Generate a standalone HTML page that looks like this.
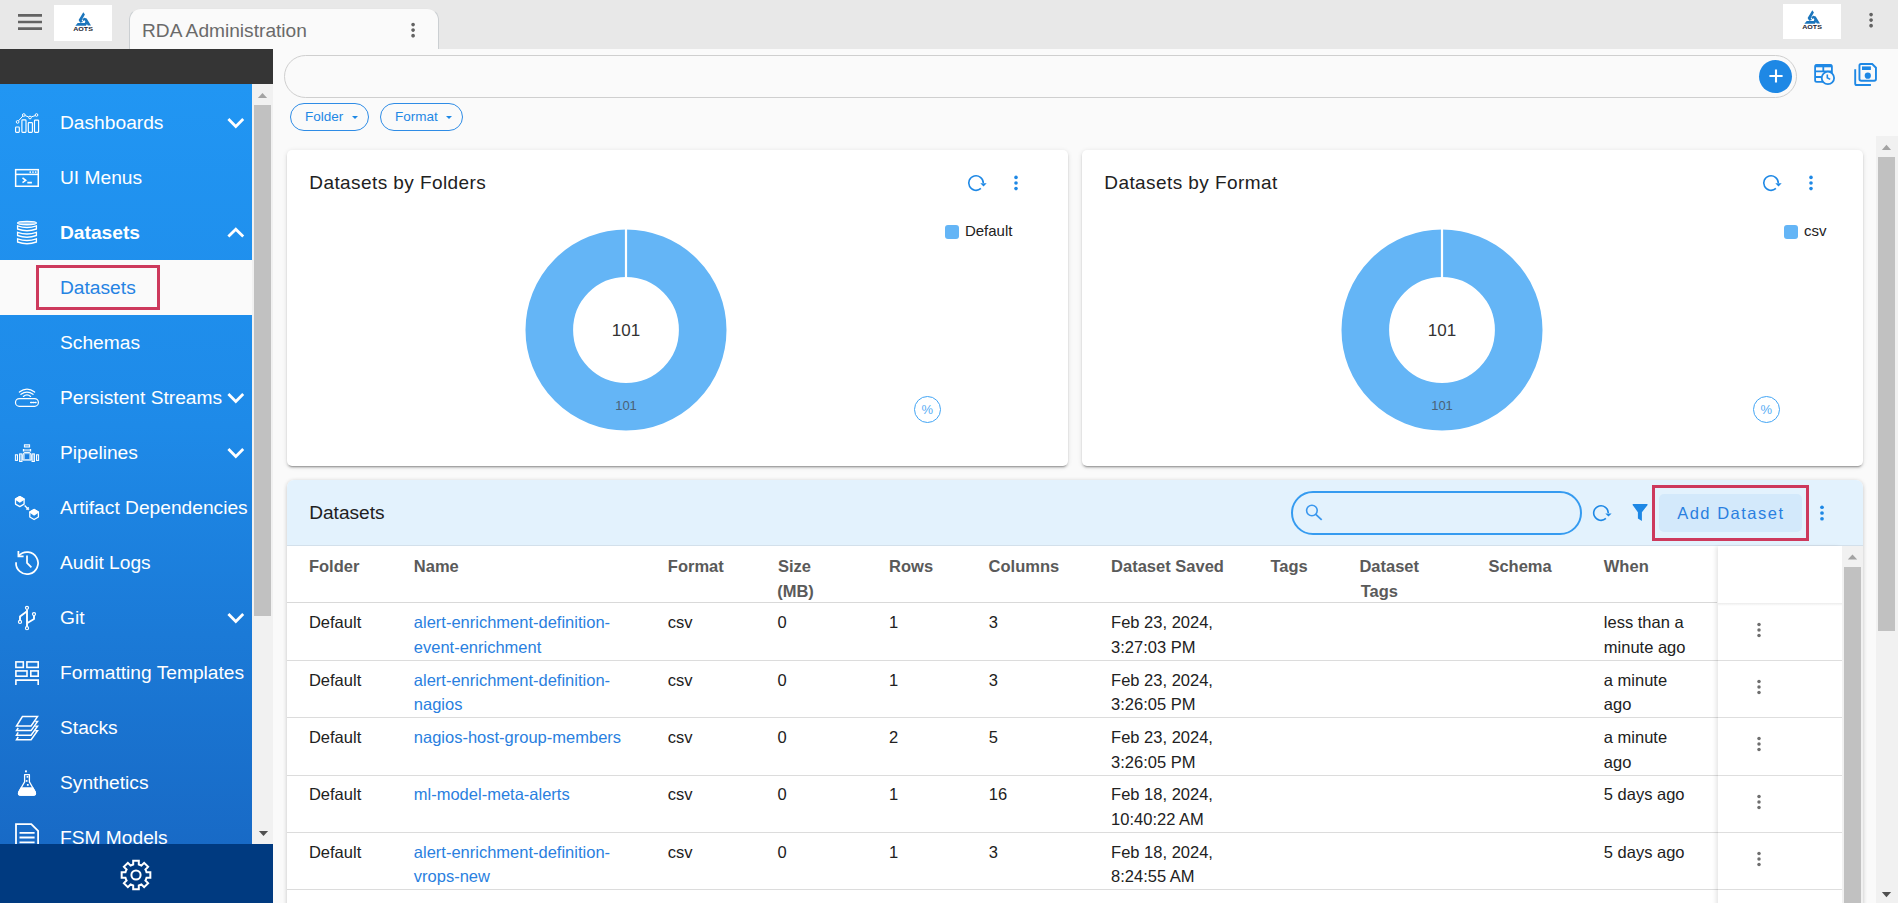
<!DOCTYPE html>
<html>
<head>
<meta charset="utf-8">
<title>RDA Administration</title>
<style>
*{box-sizing:border-box;margin:0;padding:0}
html,body{width:1898px;height:903px;overflow:hidden;background:#fafafa;font-family:"Liberation Sans",sans-serif;}
.abs{position:absolute}
#topbar{position:absolute;left:0;top:0;width:1898px;height:49px;background:#e8e8e8}
#logo1{position:absolute;left:54px;top:5px;width:58px;height:36px;background:#fff}
#logo2{position:absolute;left:1783px;top:4px;width:58px;height:35px;background:#fff}
#tab{position:absolute;left:129px;top:8px;width:310px;height:41px;background:#fafafa;border:1px solid #cbcfd2;border-top-color:#e6e6e6;border-bottom:none;border-radius:12px 12px 0 0}
#tab span{position:absolute;left:12px;top:10.7px;font-size:19.15px;line-height:22px;color:#6a6a6a;white-space:nowrap}
#dark{position:absolute;left:0;top:49px;width:273px;height:35px;background:#353535}
#side{position:absolute;left:0;top:84px;width:252px;height:760px;background:linear-gradient(#2196f3 0%,#1e8ae8 45%,#186ac6 100%);overflow:hidden}
#sidesb{position:absolute;left:252px;top:84px;width:21px;height:760px;background:#f1f1f1}
#sidesb .thumb{position:absolute;left:2px;top:21px;width:17px;height:511px;background:#c1c1c1}
#foot{position:absolute;left:0;top:844px;width:273px;height:59px;background:#003a80}
.mi{position:absolute;left:0;width:252px;height:55px;color:#fff;font-size:19.2px;line-height:55px;white-space:nowrap}
.mi .t{position:absolute;left:60px;top:0}
.mi svg.ic{position:absolute;left:12px;top:0;width:30px;height:55px}
.mi svg.ch{position:absolute;left:218.8px;top:11.4px;width:33.6px;height:33.6px}
.mi.sel{background:#fafafa;color:#2583e3}
.mi .hl{position:absolute;left:36px;top:5px;width:124px;height:45px;border:3px solid #cd395c}
#search{position:absolute;left:284px;top:55px;width:1513px;height:43px;border:1px solid #cfcfcf;border-radius:22px;background:transparent}
.chip{position:absolute;top:103px;height:28px;border:1px solid #2e8ce6;border-radius:14px;color:#1e88e5;font-size:13.5px;line-height:26px;padding-left:14px;white-space:nowrap}
.chip i{position:absolute;top:11.5px;width:0;height:0;border-left:3.5px solid transparent;border-right:3.5px solid transparent;border-top:3.5px solid #1e88e5}
.card{position:absolute;top:150px;width:781px;height:316px;background:#fff;border-radius:5px;box-shadow:0 3px 1px -2px rgba(0,0,0,.2),0 2px 2px 0 rgba(0,0,0,.14),0 1px 5px 0 rgba(0,0,0,.12)}
.pct{width:27px;height:27px;border:1px solid #42a5f5;border-radius:50%;color:#5aaef5;font-size:13px;line-height:25px;text-align:center}
.card h3{position:absolute;left:22.3px;top:21.8px;font-size:19px;font-weight:400;letter-spacing:.42px;color:#212121;line-height:22px;white-space:nowrap}
#panel{position:absolute;left:287px;top:480px;width:1576px;height:430px;background:#fff;border-radius:7px 7px 0 0;box-shadow:0 1px 4px rgba(0,0,0,.22);overflow:hidden}
#phead{position:absolute;left:0;top:0;width:1576px;height:66px;background:#e3f2fd}
#phead h3{position:absolute;left:22.2px;top:22.2px;font-size:19.1px;font-weight:400;color:#212121;line-height:22px}
.thr{position:absolute;left:0;width:1430px;height:56.6px;border-bottom:1.4px solid #d9d9d9}
.thr b{position:absolute;top:7.6px;font-size:16.5px;line-height:24.7px;color:#5a5a5a;white-space:nowrap}
.tr{position:absolute;left:0;width:1430px;height:57.35px;border-top:0}
.tr span{position:absolute;top:6.9px;font-size:16.5px;line-height:24.7px;color:#212121;white-space:nowrap}
.tr span.l2{top:31.7px}
.tr span.lk{color:#2a7fe0}
#act{position:absolute;width:125px;height:400px;background:#fff;box-shadow:-3px 0 4px -1px rgba(0,0,0,.1)}
</style>
</head>
<body>
<div id="topbar"></div>
<div id="tab"><span>RDA Administration</span></div>
<div id="logo1"></div>
<div id="logo2"></div>
<svg class="abs" style="left:13.5px;top:5.6px" width="32" height="32" viewBox="0 0 24 24"><path d="M3 18h18v-2H3v2zm0-5h18v-2H3v2zm0-7v2h18V6H3z" fill="#636363"/></svg>
<svg class="abs" style="left:54px;top:5px" width="58" height="36" viewBox="0 0 58 36"><g fill="#1b75bc"><path d="M29.3 7.2 30.9 9.6 27.7 15.2 28.9 17.1 26.2 17.7 24.6 14.9Z"/><path d="M23.7 18.1H30.7L31.7 15.9 33.3 18.6 31.9 20.7H21.4Z"/><path d="M28.2 14.2 30.3 12.7 32.7 13.5 37 20.6H33.8L30.7 15.3 29.5 15.9Z"/></g><text x="19.2" y="25.5" font-family="Liberation Sans" font-weight="700" font-size="4.7" textLength="19.7" lengthAdjust="spacingAndGlyphs" fill="#1c2430">AOTS</text></svg>
<svg class="abs" style="left:1783px;top:3.3px" width="58" height="36" viewBox="0 0 58 36"><g fill="#1b75bc"><path d="M29.3 7.2 30.9 9.6 27.7 15.2 28.9 17.1 26.2 17.7 24.6 14.9Z"/><path d="M23.7 18.1H30.7L31.7 15.9 33.3 18.6 31.9 20.7H21.4Z"/><path d="M28.2 14.2 30.3 12.7 32.7 13.5 37 20.6H33.8L30.7 15.3 29.5 15.9Z"/></g><text x="19.2" y="25.5" font-family="Liberation Sans" font-weight="700" font-size="4.7" textLength="19.7" lengthAdjust="spacingAndGlyphs" fill="#1c2430">AOTS</text></svg>
<svg class="abs" style="left:401.9px;top:19.25px" width="22.2" height="22.2" viewBox="0 0 24 24"><path d="M12 8c1.1 0 2-.9 2-2s-.9-2-2-2-2 .9-2 2 .9 2 2 2zm0 2c-1.1 0-2 .9-2 2s.9 2 2 2 2-.9 2-2-.9-2-2-2zm0 6c-1.1 0-2 .9-2 2s.9 2 2 2 2-.9 2-2-.9-2-2-2z" fill="#636363"/></svg>
<svg class="abs" style="left:1859.8px;top:8.6px" width="22.2" height="22.2" viewBox="0 0 24 24"><path d="M12 8c1.1 0 2-.9 2-2s-.9-2-2-2-2 .9-2 2 .9 2 2 2zm0 2c-1.1 0-2 .9-2 2s.9 2 2 2 2-.9 2-2-.9-2-2-2zm0 6c-1.1 0-2 .9-2 2s.9 2 2 2 2-.9 2-2-.9-2-2-2z" fill="#636363"/></svg>
<!-- plus button -->
<div class="abs" style="left:1759px;top:59.8px;width:33px;height:33px;border-radius:50%;background:#1e88e5"></div>
<svg class="abs" style="left:1765.5px;top:66.3px" width="20" height="20" viewBox="0 0 20 20"><path d="M10 3.4V16.6M3.4 10H16.6" stroke="#fff" stroke-width="2.1" fill="none"/></svg>
<!-- table+clock icon -->
<svg class="abs" style="left:1810px;top:60px" width="30" height="30" viewBox="1810 60 30 30" fill="none" stroke="#1e88e5" stroke-width="1.8"><rect x="1815.1" y="64.9" width="16.8" height="17" rx="1.6"/><path d="M1815 66H1832" stroke-width="2.6"/><path d="M1823.3 66V72M1815.1 71.3H1832M1815.1 77H1822"/><circle cx="1827.9" cy="77.9" r="6.2" fill="#fafafa"/><path d="M1827.3 74.4V77.8L1830.2 79.4" stroke-width="1.6"/></svg>
<!-- save stack icon -->
<svg class="abs" style="left:1850px;top:60px" width="30" height="30" viewBox="1850 60 30 30" fill="none" stroke="#1e88e5" stroke-width="1.9"><path d="M1861 64.05H1872.2L1875.95 67.7V79Q1875.95 80.75 1874.2 80.75H1861.2Q1859.45 80.75 1859.45 79V65.6Q1859.45 64.05 1861 64.05Z"/><rect x="1862" y="66.4" width="8.9" height="3.6" fill="#1e88e5" stroke="none"/><circle cx="1867.8" cy="75.7" r="3.1" fill="#1e88e5" stroke="none"/><path d="M1855.2 69.3V83.4Q1855.2 85 1856.8 85H1870.9"/></svg>
<div id="dark"></div>
<div id="side">
<!-- Dashboards -->
<div class="mi" style="top:11px"><svg class="ic" viewBox="12 0 30 55" fill="none" stroke="#fff" stroke-width="1.15"><rect x="15.6" y="32" width="3.7" height="5.3" rx=".7"/><rect x="21.9" y="24.9" width="4.1" height="12.4" rx=".7"/><rect x="28.3" y="27.6" width="4.1" height="9.7" rx=".7"/><rect x="34.5" y="25.1" width="4.1" height="12.2" rx=".7"/><path d="M18.5 25.8 22.9 21M25.2 20.6 28.7 22M31.3 21.9 35.3 20.6" stroke-width="1"/><circle cx="17.6" cy="26.9" r="1.35" stroke-width="1"/><circle cx="23.8" cy="20" r="1.35" stroke-width="1"/><circle cx="30" cy="22.5" r="1.35" stroke-width="1"/><circle cx="36.5" cy="20" r="1.35" stroke-width="1"/></svg><span class="t">Dashboards</span><svg class="ch" viewBox="0 0 24 24"><path d="M16.59 8.59 12 13.17 7.41 8.59 6 10l6 6 6-6z" fill="#fff"/></svg></div>
<!-- UI Menus -->
<div class="mi" style="top:66px"><svg class="ic" viewBox="12 0 30 55" fill="none" stroke="#fff" stroke-width="1.5"><rect x="15.65" y="19.65" width="22.6" height="16.6"/><path d="M15.6 24.4H38.3"/><path d="M22.5 27.8 25.7 30.3 22.5 32.7M27.3 32.6H31.9" stroke-width="1.6"/><path d="M29.5 22.1H31M32.2 22.1H33.7M34.9 22.1H36.4" stroke-width="1.7" stroke-opacity=".85"/></svg><span class="t">UI Menus</span></div>
<!-- Datasets (expanded) -->
<div class="mi" style="top:121px;font-weight:700"><svg class="ic" viewBox="12 0 30 55" fill="none" stroke="#fff" stroke-width="1.35"><ellipse cx="27" cy="18" rx="9.4" ry="1.7" fill="#fff" fill-opacity=".55"/><path d="M17.6 20.8V24Q27 27.4 36.4 24V20.8Q27 24.2 17.6 20.8Z"/><path d="M17.6 27.3V30.5Q27 33.9 36.4 30.5V27.3Q27 30.7 17.6 27.3Z"/><path d="M17.6 33.8V37Q27 40.4 36.4 37V33.8Q27 37.2 17.6 33.8Z"/></svg><span class="t">Datasets</span><svg class="ch" viewBox="0 0 24 24" style="top:10.5px"><path d="M12 8l-6 6 1.41 1.41L12 10.83l4.59 4.58L18 14z" fill="#fff"/></svg></div>
<!-- Datasets sub (active) -->
<div class="mi sel" style="top:176px"><span class="t">Datasets</span><div class="hl"></div></div>
<!-- Schemas -->
<div class="mi" style="top:231px"><span class="t">Schemas</span></div>
<!-- Persistent Streams -->
<div class="mi" style="top:286px"><svg class="ic" viewBox="12 0 30 55" fill="none" stroke="#fff" stroke-width="1.2" stroke-linecap="round"><rect x="15.5" y="28.6" width="22.9" height="7.7" rx="3.85"/><path d="M19.4 22Q27 16.2 34.6 22M21 24.3Q27 19.9 33 24.3M23.4 26.4Q27 23.5 30.6 26.4" stroke-width="1.3"/><path d="M30.6 32.5H31.8M32.8 32.5H33.9M35 32.5H36.1" stroke-width="1.3"/></svg><span class="t">Persistent Streams</span><svg class="ch" viewBox="0 0 24 24"><path d="M16.59 8.59 12 13.17 7.41 8.59 6 10l6 6 6-6z" fill="#fff"/></svg></div>
<!-- Pipelines -->
<div class="mi" style="top:341px"><svg class="ic" viewBox="12 0 30 55" fill="#fff" fill-opacity=".4" stroke="#fff" stroke-width="1"><rect x="15.4" y="29.8" width="2.1" height="5.6" fill-opacity=".15"/><rect x="19.6" y="28.9" width="2.4" height="7.6"/><rect x="32" y="28.9" width="2.4" height="7.6"/><rect x="36.5" y="29.8" width="2.1" height="5.6" fill-opacity=".15"/><rect x="24.4" y="19.8" width="5.2" height="2.2" fill-opacity=".3"/><rect x="23.6" y="24.1" width="6.8" height="2.2" fill-opacity=".55" stroke="none"/><path d="M23.5 24V26.4M30.5 24V26.4" stroke-width="1.3"/><path d="M24.3 27.4H29.7L31.2 30V35.1H22.8V30Z" fill-opacity=".5"/><rect x="25" y="29.2" width="4.1" height="4.8" fill="#1a7fe2" fill-opacity="1" stroke="none"/></svg><span class="t">Pipelines</span><svg class="ch" viewBox="0 0 24 24"><path d="M16.59 8.59 12 13.17 7.41 8.59 6 10l6 6 6-6z" fill="#fff"/></svg></div>
<!-- Artifact Dependencies -->
<div class="mi" style="top:396px"><svg class="ic" viewBox="12 0 30 55" fill="none" stroke="#fff" stroke-width="1.3" stroke-linejoin="round"><path d="M19.8 16.6 24.1 19.1V24.1L19.8 26.6 15.5 24.1V19.1Z"/><path d="M19.8 16.6 24.1 19.1 19.8 22 15.5 19.1Z" fill="#fff"/><path d="M34.1 29.5 38.4 32V37L34.1 39.5 29.8 37V32Z"/><path d="M34.1 29.5 38.4 32 34.1 34.9 29.8 32Z" fill="#fff"/><path d="M24.6 25.4 27.6 28.4" stroke-width="1.4"/><path d="M28.9 29.8 26.2 29.3 28.4 27.1Z" fill="#fff" stroke-width=".6"/></svg><span class="t">Artifact Dependencies</span></div>
<!-- Audit Logs -->
<div class="mi" style="top:451px"><svg class="ic" viewBox="12 0 30 55" fill="none" stroke="#fff" stroke-width="1.75"><path d="M16.05 27.2A11 11 0 1 0 18.9 20.7"/><path d="M18.4 16V21.3H23.6"/><path d="M27 20.4V28L31.4 32.3"/></svg><span class="t">Audit Logs</span></div>
<!-- Git -->
<div class="mi" style="top:506px"><svg class="ic" viewBox="12 0 30 55" fill="none" stroke="#fff" stroke-width="1.9"><path d="M27 19.6V36.4M27 21.2 20 26.6V30M34 26V29L27 33.3" stroke-linejoin="round"/><circle cx="27" cy="17.85" r="1.55" stroke-width="1.2"/><circle cx="27" cy="38.2" r="1.55" stroke-width="1.2"/><circle cx="20" cy="31.9" r="1.55" stroke-width="1.2"/><circle cx="34" cy="24.1" r="1.55" stroke-width="1.2"/></svg><span class="t">Git</span><svg class="ch" viewBox="0 0 24 24"><path d="M16.59 8.59 12 13.17 7.41 8.59 6 10l6 6 6-6z" fill="#fff"/></svg></div>
<!-- Formatting Templates -->
<div class="mi" style="top:561px"><svg class="ic" viewBox="12 0 30 55" fill="none" stroke="#fff" stroke-width="1.6"><rect x="15.9" y="16.9" width="7.4" height="5.5"/><rect x="26.9" y="16.9" width="11.3" height="5.5"/><rect x="15.9" y="25.9" width="11.1" height="5.3"/><rect x="30.8" y="25.9" width="7.4" height="5.3"/><path d="M15.9 40V35.1H38.2V40"/></svg><span class="t">Formatting Templates</span></div>
<!-- Stacks -->
<div class="mi" style="top:616px"><svg class="ic" viewBox="12 0 30 55" fill="none" stroke="#fff" stroke-width="1.5" stroke-linejoin="miter"><path d="M22.4 16.6H37.5L31.1 26H16.5Z"/><path d="M18.2 27.8 16.5 30.6H31.1L37.5 21.6H35.3"/><path d="M18.2 32.4 16.5 35.2H31.1L37.5 26.2H35.3"/><path d="M18.2 37 16.5 39.8H31.1L37.5 30.8H35.3"/></svg><span class="t">Stacks</span></div>
<!-- Synthetics -->
<div class="mi" style="top:671px"><svg class="ic" viewBox="12 0 30 55" fill="none" stroke="#fff" stroke-width="1.3" stroke-linejoin="round"><path d="M24.6 19.7H29.4V26.9L35.1 36.8Q36.4 40 33.4 40.2H20.6Q17.6 40 18.9 36.8L24.6 26.9Z"/><path d="M21.2 32.9H32.8L35.1 36.8Q36.4 40 33.4 40.2H20.6Q17.6 40 18.9 36.8Z" fill="#fff"/><rect x="25" y="15.4" width="1.9" height="1.9" fill="#fff" stroke="none"/><rect x="26.6" y="21" width="1.7" height="1.7" fill="#fff" stroke="none"/><rect x="25.8" y="25.1" width="1.7" height="1.7" fill="#fff" stroke="none"/><rect x="26.9" y="29" width="1.8" height="1.8" fill="#fff" stroke="none"/></svg><span class="t">Synthetics</span></div>
<!-- FSM Models -->
<div class="mi" style="top:726px"><svg class="ic" viewBox="12 0 30 55" fill="none" stroke="#fff" stroke-width="1.8"><path d="M16 40V14.1H31.3L38.1 20.9V40"/><path d="M19.5 22.9H34.6M19.5 27.5H34.6M19.5 32.3H34.6"/></svg><span class="t">FSM Models</span></div>
</div>
<div id="sidesb"><div class="thumb"></div></div>
<div id="foot"></div>
<div id="search"></div>
<div class="chip" style="left:290px;width:79px">Folder<i style="left:61px"></i></div>
<div class="chip" style="left:380px;width:83px">Format<i style="left:65px"></i></div>
<div class="card" style="left:287px"><h3>Datasets by Folders</h3><svg class="abs" style="left:676.7px;top:21.75px" width="24" height="22" viewBox="-12 -11 24 22" fill="none"><path d="M7.3 0A7.3 7.3 0 1 0 4.9 5.45" stroke="#1e88e5" stroke-width="1.6"/><path d="M4.3 .3H10.7L7.5 3.5Z" fill="#1e88e5"/></svg><svg class="abs" style="left:725.6px;top:23.75px" width="6" height="18" viewBox="-3 -9 6 18"><circle cy="-5.6" r="1.8" fill="#1e88e5"/><circle r="1.8" fill="#1e88e5"/><circle cy="5.6" r="1.8" fill="#1e88e5"/></svg><svg class="abs" style="left:236.60000000000002px;top:77.9px" width="204" height="204" viewBox="-102 -102 204 204"><circle r="76.7" fill="none" stroke="#64b5f6" stroke-width="47.6"/><path d="M0 -101V-52" stroke="#fff" stroke-width="2.2"/><text y="6.1" text-anchor="middle" font-family="Liberation Sans" font-size="17" fill="#333">101</text><text y="80" text-anchor="middle" font-family="Liberation Sans" font-size="13" fill="#4a6276">101</text></svg><div class="abs" style="left:658px;top:75px;width:14px;height:14px;border-radius:3px;background:#64b5f6"></div><div class="abs" style="left:677.9px;top:72px;font-size:15px;line-height:18px;color:#212121;white-space:nowrap">Default</div><div class="abs pct" style="left:626.9px;top:245.8px">%</div></div>
<div class="card" style="left:1082px"><h3>Datasets by Format</h3><svg class="abs" style="left:676.7px;top:21.75px" width="24" height="22" viewBox="-12 -11 24 22" fill="none"><path d="M7.3 0A7.3 7.3 0 1 0 4.9 5.45" stroke="#1e88e5" stroke-width="1.6"/><path d="M4.3 .3H10.7L7.5 3.5Z" fill="#1e88e5"/></svg><svg class="abs" style="left:725.6px;top:23.75px" width="6" height="18" viewBox="-3 -9 6 18"><circle cy="-5.6" r="1.8" fill="#1e88e5"/><circle r="1.8" fill="#1e88e5"/><circle cy="5.6" r="1.8" fill="#1e88e5"/></svg><svg class="abs" style="left:258.3px;top:77.9px" width="204" height="204" viewBox="-102 -102 204 204"><circle r="76.7" fill="none" stroke="#64b5f6" stroke-width="47.6"/><path d="M0 -101V-52" stroke="#fff" stroke-width="2.2"/><text y="6.1" text-anchor="middle" font-family="Liberation Sans" font-size="17" fill="#333">101</text><text y="80" text-anchor="middle" font-family="Liberation Sans" font-size="13" fill="#4a6276">101</text></svg><div class="abs" style="left:702px;top:75px;width:14px;height:14px;border-radius:3px;background:#64b5f6"></div><div class="abs" style="left:721.9px;top:72px;font-size:15px;line-height:18px;color:#212121;white-space:nowrap">csv</div><div class="abs pct" style="left:670.9px;top:245.8px">%</div></div>
<div id="panel">
<div id="phead"><h3>Datasets</h3>
<div class="abs" style="left:1004px;top:11px;width:290.5px;height:44px;border:2px solid #359bf0;border-radius:22px"></div>
<svg class="abs" style="left:1013px;top:20px" width="26" height="26" viewBox="1300 500 26 26" fill="none" stroke="#3a97ee" stroke-width="1.6"><circle cx="1311.9" cy="510.5" r="5.3"/><path d="M1315.8 514.4 1321.7 519.9" stroke-width="1.8"/></svg>
<svg class="abs" style="left:1301.6px;top:21.600000000000023px" width="24" height="22" viewBox="-12 -11 24 22" fill="none"><path d="M7.3 0A7.3 7.3 0 1 0 4.9 5.45" stroke="#1e88e5" stroke-width="1.6"/><path d="M4.3 .5H10.6L7.5 3.5Z" fill="#1e88e5"/></svg>
<svg class="abs" style="left:1341px;top:20px" width="24" height="24" viewBox="1628 500 24 24"><path d="M1633.4 504.1H1646.8Q1648.2 504.2 1647.4 505.3L1641.9 512.2V520.9L1637.9 518.5V512.2L1632.8 505.3Q1632 504.2 1633.4 504.1Z" fill="#1e88e5"/></svg>
<div class="abs" style="left:1365px;top:5px;width:156.7px;height:55.8px;border:3px solid #cd395c"></div>
<div class="abs" style="left:1372px;top:14px;width:143px;height:38px;border-radius:5px;background:#d3e9fb;color:#2a7fe0;font-size:16.5px;letter-spacing:1.5px;line-height:38px;text-align:left;padding-left:18.2px;white-space:nowrap">Add Dataset</div>
<svg class="abs" style="left:1531.6px;top:23.600000000000023px" width="6" height="18" viewBox="-3 -9 6 18"><circle cy="-5.75" r="1.85" fill="#1e88e5"/><circle r="1.85" fill="#1e88e5"/><circle cy="5.75" r="1.85" fill="#1e88e5"/></svg>
<div class="abs" style="left:0;top:65.4px;width:1576px;height:1px;background:rgba(0,0,0,.07)"></div>
</div>
<div class="thr" style="top:66px">
<b style="left:21.95px">Folder</b>
<b style="left:126.80px">Name</b>
<b style="left:380.85px">Format</b>
<b style="left:490.90px">Size</b>
<b style="left:602.10px">Rows</b>
<b style="left:701.60px">Columns</b>
<b style="left:824.10px">Dataset Saved</b>
<b style="left:983.40px">Tags</b>
<b style="left:1072.40px">Dataset</b>
<b style="left:1201.40px">Schema</b>
<b style="left:1316.80px">When</b>
<b style="left:490.20px;top:33.1px">(MB)</b>
<b style="left:1073.70px;top:33.1px">Tags</b>
</div>
<div class="tr" style="top:123.30px">
<span class="" style="left:21.95px">Default</span>
<span class="lk" style="left:126.80px">alert-enrichment-definition-</span>
<span class="l2 lk" style="left:126.80px">event-enrichment</span>
<span class="" style="left:380.85px">csv</span>
<span class="" style="left:490.40px">0</span>
<span class="" style="left:602.10px">1</span>
<span class="" style="left:701.80px">3</span>
<span class="" style="left:824.10px">Feb 23, 2024,</span>
<span class="l2 " style="left:824.10px">3:27:03 PM</span>
<span class="" style="left:1316.80px">less than a</span>
<span class="l2 " style="left:1316.80px">minute ago</span>
</div>
<div class="tr" style="top:180.65px">
<span class="" style="left:21.95px">Default</span>
<span class="lk" style="left:126.80px">alert-enrichment-definition-</span>
<span class="l2 lk" style="left:126.80px">nagios</span>
<span class="" style="left:380.85px">csv</span>
<span class="" style="left:490.40px">0</span>
<span class="" style="left:602.10px">1</span>
<span class="" style="left:701.80px">3</span>
<span class="" style="left:824.10px">Feb 23, 2024,</span>
<span class="l2 " style="left:824.10px">3:26:05 PM</span>
<span class="" style="left:1316.80px">a minute</span>
<span class="l2 " style="left:1316.80px">ago</span>
</div>
<div class="tr" style="top:238.00px">
<span class="" style="left:21.95px">Default</span>
<span class="lk" style="left:126.80px">nagios-host-group-members</span>
<span class="" style="left:380.85px">csv</span>
<span class="" style="left:490.40px">0</span>
<span class="" style="left:602.10px">2</span>
<span class="" style="left:701.80px">5</span>
<span class="" style="left:824.10px">Feb 23, 2024,</span>
<span class="l2 " style="left:824.10px">3:26:05 PM</span>
<span class="" style="left:1316.80px">a minute</span>
<span class="l2 " style="left:1316.80px">ago</span>
</div>
<div class="tr" style="top:295.35px">
<span class="" style="left:21.95px">Default</span>
<span class="lk" style="left:126.80px">ml-model-meta-alerts</span>
<span class="" style="left:380.85px">csv</span>
<span class="" style="left:490.40px">0</span>
<span class="" style="left:602.10px">1</span>
<span class="" style="left:701.80px">16</span>
<span class="" style="left:824.10px">Feb 18, 2024,</span>
<span class="l2 " style="left:824.10px">10:40:22 AM</span>
<span class="" style="left:1316.80px">5 days ago</span>
</div>
<div class="tr" style="top:352.70px">
<span class="" style="left:21.95px">Default</span>
<span class="lk" style="left:126.80px">alert-enrichment-definition-</span>
<span class="l2 lk" style="left:126.80px">vrops-new</span>
<span class="" style="left:380.85px">csv</span>
<span class="" style="left:490.40px">0</span>
<span class="" style="left:602.10px">1</span>
<span class="" style="left:701.80px">3</span>
<span class="" style="left:824.10px">Feb 18, 2024,</span>
<span class="l2 " style="left:824.10px">8:24:55 AM</span>
<span class="" style="left:1316.80px">5 days ago</span>
</div>
<div class="abs" style="left:0;top:180px;width:1431px;height:1px;background:#dcdcdc"></div>
<div class="abs" style="left:0;top:237px;width:1431px;height:1px;background:#dcdcdc"></div>
<div class="abs" style="left:0;top:295px;width:1431px;height:1px;background:#dcdcdc"></div>
<div class="abs" style="left:0;top:352px;width:1431px;height:1px;background:#dcdcdc"></div>
<div class="abs" style="left:0;top:409px;width:1431px;height:1px;background:#dcdcdc"></div>
<div id="act" style="left:1431px;top:66px"></div>
<div class="abs" style="left:1431px;top:123px;width:124px;height:3px;background:linear-gradient(#ececec,#fff)"></div>
<div class="abs" style="left:1431px;top:180px;width:124px;height:1px;background:#dedede"></div>
<div class="abs" style="left:1431px;top:237px;width:124px;height:1px;background:#dedede"></div>
<div class="abs" style="left:1431px;top:295px;width:124px;height:1px;background:#dedede"></div>
<div class="abs" style="left:1431px;top:352px;width:124px;height:1px;background:#dedede"></div>
<div class="abs" style="left:1431px;top:409px;width:124px;height:1px;background:#dedede"></div>
<svg class="abs" style="left:1468.95px;top:140.65px" width="6" height="18" viewBox="-3 -9 6 18"><circle cy="-5.5" r="1.75" fill="#6e6e6e"/><circle r="1.75" fill="#6e6e6e"/><circle cy="5.5" r="1.75" fill="#6e6e6e"/></svg>
<svg class="abs" style="left:1468.95px;top:198.00px" width="6" height="18" viewBox="-3 -9 6 18"><circle cy="-5.5" r="1.75" fill="#6e6e6e"/><circle r="1.75" fill="#6e6e6e"/><circle cy="5.5" r="1.75" fill="#6e6e6e"/></svg>
<svg class="abs" style="left:1468.95px;top:255.35px" width="6" height="18" viewBox="-3 -9 6 18"><circle cy="-5.5" r="1.75" fill="#6e6e6e"/><circle r="1.75" fill="#6e6e6e"/><circle cy="5.5" r="1.75" fill="#6e6e6e"/></svg>
<svg class="abs" style="left:1468.95px;top:312.70px" width="6" height="18" viewBox="-3 -9 6 18"><circle cy="-5.5" r="1.75" fill="#6e6e6e"/><circle r="1.75" fill="#6e6e6e"/><circle cy="5.5" r="1.75" fill="#6e6e6e"/></svg>
<svg class="abs" style="left:1468.95px;top:370.05px" width="6" height="18" viewBox="-3 -9 6 18"><circle cy="-5.5" r="1.75" fill="#6e6e6e"/><circle r="1.75" fill="#6e6e6e"/><circle cy="5.5" r="1.75" fill="#6e6e6e"/></svg>
<div class="abs" style="left:1555px;top:66px;width:21px;height:400px;background:#f1f1f1"></div>
<div class="abs" style="left:1557px;top:87px;width:17px;height:400px;background:#c1c1c1"></div>
<svg class="abs" style="left:1560px;top:73.29999999999995px" width="11" height="8" viewBox="0 0 11 8"><path d="M.8 6.4 5.5 1.5 10.2 6.4Z" fill="#a3a3a3"/></svg>
</div>
<svg class="abs" style="left:117.8px;top:856.9px" width="36" height="36" viewBox="-18 -18 36 36" fill="none" stroke="#fff" stroke-width="2" stroke-linejoin="miter"><path d="M-2.80 -10.53L-2.80 -14.33L2.80 -14.33L2.80 -10.53A10.9 10.9 0 0 1 5.47 -9.43L8.15 -12.11L12.11 -8.15L9.43 -5.47A10.9 10.9 0 0 1 10.53 -2.80L14.33 -2.80L14.33 2.80L10.53 2.80A10.9 10.9 0 0 1 9.43 5.47L12.11 8.15L8.15 12.11L5.47 9.43A10.9 10.9 0 0 1 2.80 10.53L2.80 14.33L-2.80 14.33L-2.80 10.53A10.9 10.9 0 0 1 -5.47 9.43L-8.15 12.11L-12.11 8.15L-9.43 5.47A10.9 10.9 0 0 1 -10.53 2.80L-14.33 2.80L-14.33 -2.80L-10.53 -2.80A10.9 10.9 0 0 1 -9.43 -5.47L-12.11 -8.15L-8.15 -12.11L-5.47 -9.43A10.9 10.9 0 0 1 -2.80 -10.53Z"/><circle r="4.6"/></svg>
<svg class="abs" style="left:257px;top:91.5px" width="11" height="7" viewBox="0 0 11 7"><path d="M.9 5.9 5.5 1.1 10.1 5.9Z" fill="#a3a3a3"/></svg>
<svg class="abs" style="left:258px;top:829.5px" width="11" height="7" viewBox="0 0 11 7"><path d="M.9 1.1 5.5 5.9 10.1 1.1Z" fill="#505050"/></svg>
<div class="abs" style="left:1876px;top:136px;width:22px;height:767px;background:#f1f1f1"></div>
<div class="abs" style="left:1878px;top:157px;width:17px;height:474px;background:#c1c1c1"></div>
<svg class="abs" style="left:1881px;top:144px" width="11" height="7" viewBox="0 0 11 7"><path d="M.9 6 5.5 .8 10.1 6Z" fill="#a3a3a3"/></svg>
<svg class="abs" style="left:1881px;top:890.5px" width="11" height="7" viewBox="0 0 11 7"><path d="M.9 1 5.5 6.2 10.1 1Z" fill="#505050"/></svg>
</body>
</html>
